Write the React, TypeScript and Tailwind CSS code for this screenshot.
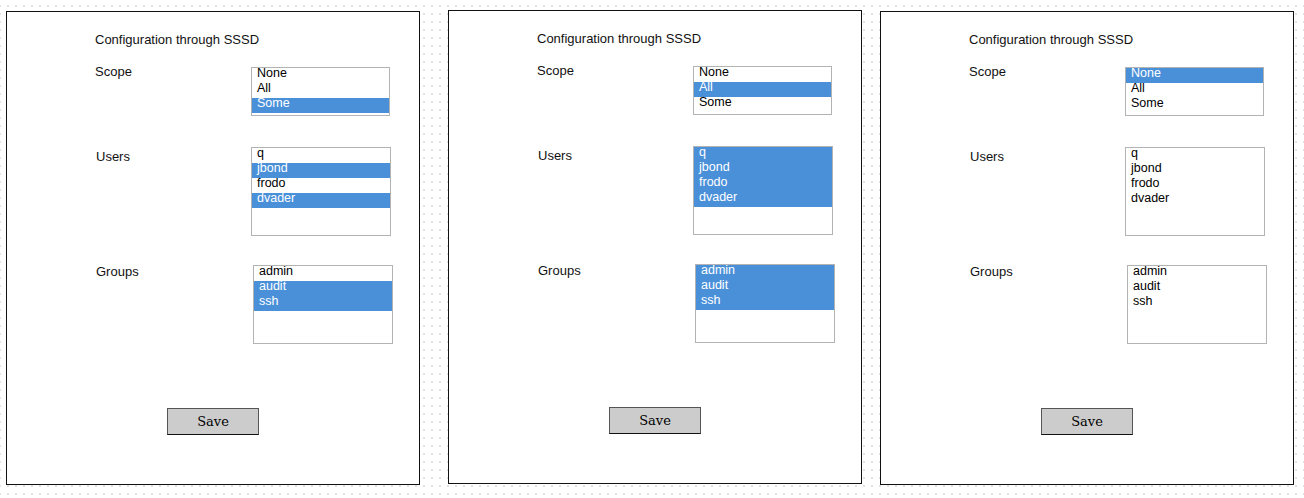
import React from 'react';

type Item = { label: string; selected?: boolean };

type PanelData = {
  className: string;
  scope: Item[];
  users: Item[];
  groups: Item[];
};

const mk = (labels: string[], sel: string[]): Item[] =>
  labels.map((label) => ({ label, selected: sel.includes(label) }));

const SCOPE = ['None', 'All', 'Some'];
const USERS = ['q', 'jbond', 'frodo', 'dvader'];
const GROUPS = ['admin', 'audit', 'ssh'];

const panels: PanelData[] = [
  {
    className: 'ml-[6px] mt-[11px]',
    scope: mk(SCOPE, ['Some']),
    users: mk(USERS, ['jbond', 'dvader']),
    groups: mk(GROUPS, ['audit', 'ssh']),
  },
  {
    className: 'ml-[28px] mt-[10px]',
    scope: mk(SCOPE, ['All']),
    users: mk(USERS, USERS),
    groups: mk(GROUPS, GROUPS),
  },
  {
    className: 'ml-[18px] mt-[11px]',
    scope: mk(SCOPE, ['None']),
    users: mk(USERS, []),
    groups: mk(GROUPS, []),
  },
];

function ListBox({ items, className }: { items: Item[]; className: string }) {
  return (
    <div className={`border border-[#b3b3b3] bg-white ${className}`}>
      {items.map((it) => (
        <div
          key={it.label}
          className={`h-[15px] pl-[5px] text-[12.5px] leading-[11px] ${
            it.selected ? 'bg-[#4a90d9] text-white' : 'text-black'
          }`}
        >
          {it.label}
        </div>
      ))}
    </div>
  );
}

function Row({
  label,
  labelClass,
  children,
  className,
}: {
  label: string;
  labelClass: string;
  children: React.ReactNode;
  className: string;
}) {
  return (
    <div className={`flex items-start ${className}`}>
      <div className={`w-[156px] leading-[15px] ${labelClass}`}>{label}</div>
      {children}
    </div>
  );
}

function Panel({ data }: { data: PanelData }) {
  return (
    <div
      className={`flex h-[474px] w-[414px] shrink-0 flex-col border border-[#111] bg-white pl-[88px] text-[13px] text-[#111] ${data.className}`}
    >
      <div className="mt-[20px] leading-[15px]">Configuration through SSSD</div>
      <Row label="Scope" labelClass="-mt-[3px]" className="mt-[20px]">
        <ListBox items={data.scope} className="h-[49px] w-[139px]" />
      </Row>
      <Row label="Users" labelClass="mt-[2px]" className="mt-[31px] pl-px">
        <ListBox items={data.users} className="-ml-px h-[89px] w-[140px]" />
      </Row>
      <Row label="Groups" labelClass="-mt-px" className="mt-[29px] pl-px">
        <ListBox items={data.groups} className="ml-px h-[79px] w-[140px]" />
      </Row>
      <div className="mt-[64px] pl-[72px]">
        <button
          className="h-[27px] w-[92px] border-[1.5px] border-[#555] border-b-[#111] bg-[#cccccc] text-[13px] text-black"
          style={{ fontFamily: '"DejaVu Serif", "Liberation Serif", serif' }}
        >
          Save
        </button>
      </div>
    </div>
  );
}

export default function App() {
  return (
    <div
      className="flex h-[498px] w-[1304px] items-start overflow-hidden bg-white bg-[radial-gradient(circle,#e2e2e2_1px,transparent_1.2px)] bg-size-[8px_8px] bg-position-[4px_2px]"
      style={{ fontFamily: '"Liberation Sans", Arial, sans-serif' }}
    >
      {panels.map((p, i) => (
        <Panel key={i} data={p} />
      ))}
    </div>
  );
}
